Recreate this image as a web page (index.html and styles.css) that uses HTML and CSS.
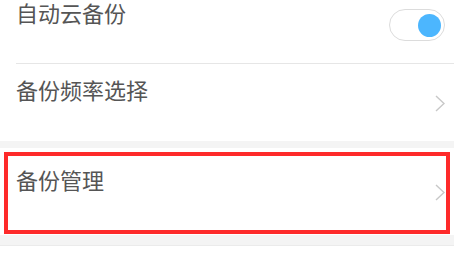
FILE: index.html
```html
<!DOCTYPE html>
<html lang="zh-CN">
<head>
<meta charset="utf-8">
<title>备份设置</title>
<link rel="stylesheet" href="styles.css">
</head>
<body>
<div class="group">
  <div class="row row-first">
    <span class="label label-first">自动云备份</span>
    <span class="toggle"><span class="knob"></span></span>
  </div>
  <div class="row row-second">
    <span class="label">备份频率选择</span>
    <svg class="chev" width="10" height="17" viewBox="0 0 10 17"><polyline points="1,1 9,8.5 1,16" fill="none" stroke="#c8c8c8" stroke-width="1.4"/></svg>
  </div>
</div>
<div class="gap"></div>
<div class="group">
  <div class="row row-third">
    <span class="label">备份管理</span>
    <svg class="chev" width="10" height="17" viewBox="0 0 10 17"><polyline points="1,1 9,8.5 1,16" fill="none" stroke="#c8c8c8" stroke-width="1.4"/></svg>
    <span class="annot"></span>
  </div>
</div>
<div class="gap gap-bottom"></div>
</body>
</html>
```
FILE: styles.css
```css
html, body {
  margin: 0;
  padding: 0;
  background: #ffffff;
}
body {
  font-family: "Noto Sans CJK SC", "Noto Sans", sans-serif;
  color: #555555;
  width: 454px;
  overflow: hidden;
}
.group {
  background: #ffffff;
}
.row {
  display: flex;
  justify-content: space-between;
  align-items: center;
  padding-right: 9px;
  margin-left: 16px;
  box-sizing: border-box;
}
.label {
  font-size: 22px;
  line-height: 22px;
  align-self: flex-start;
}
.label-first {
  line-height: 24px;
}
.row-first {
  height: 64px;
  align-items: flex-start;
  border-bottom: 1px solid #e6e6e6;
}
.row-second {
  height: 77px;
}
.row-second .label {
  margin-top: 14px;
}
.row-third {
  position: relative;
  height: 87px;
}
.row-third .label {
  margin-top: 20px;
}
.toggle {
  display: flex;
  justify-content: flex-end;
  align-items: center;
  width: 56px;
  height: 32px;
  margin-top: 9px;
  box-sizing: border-box;
  border: 1px solid #dcdcdc;
  border-radius: 16px;
  padding-right: 3px;
  background: #ffffff;
}
.knob {
  width: 23px;
  height: 23px;
  border-radius: 50%;
  background: #4cb6fe;
}
.chev {
  display: block;
  margin-top: 1px;
}
.gap {
  height: 7px;
  background: #f4f4f4;
}
.gap-bottom {
  height: 10px;
  border-bottom: 1px solid #ebebeb;
}
.annot {
  position: absolute;
  left: -12px;
  right: 4px;
  top: 4px;
  bottom: 1px;
  border: 4px solid #fe2a2a;
}
```
